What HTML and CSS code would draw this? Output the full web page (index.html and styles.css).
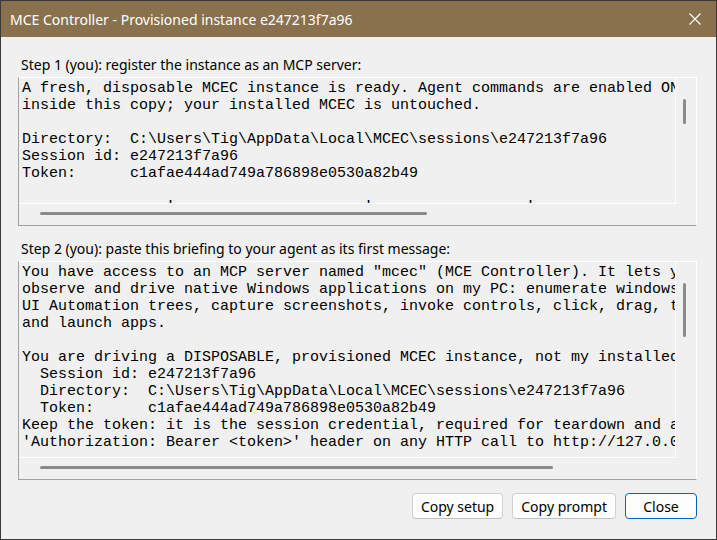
FILE: index.html
```html
<!DOCTYPE html>
<html lang="en">
<head>
  <meta charset="UTF-8">
  <meta name="viewport" content="width=device-width, initial-scale=1.0">
  <title>MCE Controller - Provisioned instance e247213f7a96</title>
  <link rel="stylesheet" href="styles.css">
</head>
<body>

  <div class="window">
    <!-- title bar -->
    <div class="titlebar">
      <span class="title">MCE Controller - Provisioned instance e247213f7a96</span>
      <svg class="close-x" viewBox="0 0 12 12" aria-label="Close">
        <path d="M0.5 0.5 L11.5 11.5 M11.5 0.5 L0.5 11.5" stroke="#fff" stroke-width="1.1" fill="none"/>
      </svg>
    </div>

    <div class="content">
      <!-- Step 1 -->
      <div class="step-label">Step 1 (you): register the instance as an MCP server:</div>
      <div class="textbox textbox-setup">
<pre class="textbox-text">A fresh, disposable MCEC instance is ready. Agent commands are enabled ONLY
inside this copy; your installed MCEC is untouched.

Directory:  C:\Users\Tig\AppData\Local\MCEC\sessions\e247213f7a96
Session id: e247213f7a96
Token:      c1afae444ad749a786898e0530a82b49

                '                     '                 '</pre>
        <div class="vscroll"><div class="vthumb"></div></div>
        <div class="hscroll"><div class="hthumb"></div></div>
        <div class="corner"></div>
      </div>

      <!-- Step 2 -->
      <div class="step-label step-two">Step 2 (you): paste this briefing to your agent as its first message:</div>
      <div class="textbox textbox-prompt">
<pre class="textbox-text">You have access to an MCP server named "mcec" (MCE Controller). It lets you
observe and drive native Windows applications on my PC: enumerate windows,
UI Automation trees, capture screenshots, invoke controls, click, drag, type,
and launch apps.

You are driving a DISPOSABLE, provisioned MCEC instance, not my installed
  Session id: e247213f7a96
  Directory:  C:\Users\Tig\AppData\Local\MCEC\sessions\e247213f7a96
  Token:      c1afae444ad749a786898e0530a82b49
Keep the token: it is the session credential, required for teardown and as
'Authorization: Bearer &lt;token&gt;' header on any HTTP call to http://127.0.0.1</pre>
        <div class="vscroll"><div class="vthumb"></div></div>
        <div class="hscroll"><div class="hthumb"></div></div>
        <div class="corner"></div>
      </div>

      <!-- buttons -->
      <div class="buttons">
        <button class="btn">Copy setup</button>
        <button class="btn">Copy prompt</button>
        <button class="btn btn-default">Close</button>
      </div>
    </div>
  </div>

</body>
</html>
```

FILE: styles.css
```css
* {
  box-sizing: border-box;
}

body {
  margin: 0;
  background: #f0f0f0;
}

.window {
  width: 717px;
  height: 540px;
  border: 1px solid #3a3a3a;
  background: #f0f0f0;
  display: flex;
  flex-direction: column;
  font-family: "Segoe UI", "Noto Sans", sans-serif;
  color: #000;
}

.titlebar {
  height: 36px;
  background: #8a714e;
  color: #fff;
  display: flex;
  align-items: center;
  justify-content: space-between;
  padding: 0 15px 0 9px;
  font-size: 14px;
}

.close-x {
  width: 12px;
  height: 12px;
}

.content {
  flex: 1;
  display: flex;
  flex-direction: column;
  padding: 18px 19px 0 17px;
}

.step-label {
  font-size: 14px;
  line-height: 20px;
  padding-left: 3px;
  margin-bottom: 2px;
}

.step-two {
  margin-top: 13px;
}

/* read-only text box with both scrollbars */
.textbox {
  display: grid;
  grid-template-columns: 1fr 20px;
  border-top: 1px solid #fff;
  border-right: 1px solid #fff;
  border-left: 1px solid #a0a0a0;
  border-bottom: 1px solid #a0a0a0;
}

.textbox-setup {
  grid-template-rows: 126px 21px;
}

.textbox-prompt {
  grid-template-rows: 196px 21px;
}

.textbox-text {
  margin: 0;
  padding: 2px 0 0 3px;
  font-family: "Liberation Mono", "Courier New", monospace;
  font-size: 15px;
  line-height: 17px;
  white-space: pre;
  overflow: hidden;
  border-right: 1px solid #fff;
  border-bottom: 1px solid #fff;
}

.vthumb {
  width: 3px;
  margin: 21px 0 0 7px;
  background: #8a8a8a;
  border-radius: 2px;
}

.hthumb {
  height: 3px;
  margin: 8px 0 0 21px;
  background: #8a8a8a;
  border-radius: 2px;
}

.textbox-setup .vthumb {
  height: 25px;
}

.textbox-setup .hthumb {
  width: 387px;
}

.textbox-prompt .vthumb {
  height: 54px;
}

.textbox-prompt .hthumb {
  width: 513px;
}

.buttons {
  display: flex;
  justify-content: flex-end;
  gap: 9px;
  margin-top: 13px;
}

.btn {
  height: 26px;
  min-width: 72px;
  padding: 0 8px;
  font-family: "Segoe UI", "Noto Sans", sans-serif;
  font-size: 14px;
  color: #000;
  background: #fdfdfd;
  border: 1px solid #d0d0d0;
  border-bottom-color: #c0c0c0;
  border-radius: 4px;
}

.btn-default {
  border-color: #0067c0;
}
```
